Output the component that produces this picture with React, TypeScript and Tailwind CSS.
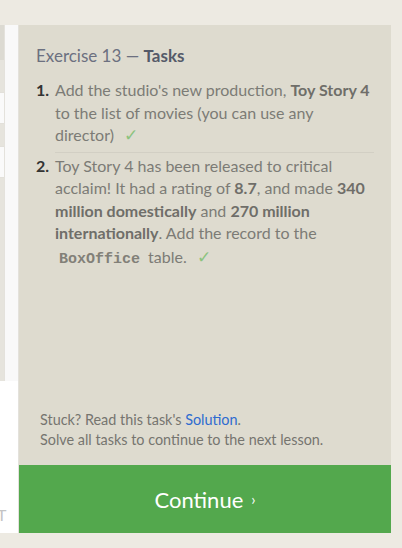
import React from 'react';

const font = { fontFamily: 'Lato, "Open Sans", sans-serif' };

function Check() {
  return <span className="ml-[10px] text-[17px] text-[#8cc37f]">✓</span>;
}

function LeftStrip() {
  return (
    <div className="w-[19px] flex flex-col shrink-0">
      <div className="flex flex-1">
        <div className="w-[4px] flex flex-col bg-[#e6e4dd]">
          <div className="h-[35px] bg-[#dcdad2]" />
          <div className="h-[32px]" />
          <div className="h-[32px] bg-[#fafafa] border-y border-[#e2e0da]" />
          <div className="h-[22px]" />
          <div className="h-[32px] bg-[#fafafa] border-y border-[#e2e0da]" />
        </div>
        <div className="flex-1 bg-[#f9f9f9] border-l border-r border-[#e4e2dc]" />
      </div>
      <div className="h-[152px] bg-white border-r border-[#e4e2dc] flex items-end pb-[10px] overflow-hidden">
        <span className="text-[16px] leading-none text-[#c4c4c4] -ml-[3px]">T</span>
      </div>
    </div>
  );
}

export default function App() {
  return (
    <div className="w-[402px] h-[548px] bg-[#edeae2] pt-[25px] pb-[15px] pr-[11px] flex overflow-hidden" style={font}>
      <LeftStrip />
      <div className="flex-1 flex flex-col bg-[#dedbcf]">
        <div className="flex-1 px-[17px] pt-[20px]">
          <h2 className="text-[17px] leading-[22px] text-[#6c7080]">
            Exercise 13 — <span className="font-bold text-[#555a69]">Tasks</span>
          </h2>
          <ol className="mt-[12px] text-[16px] leading-[22.5px] text-[#7c7b76]">
            <li className="flex pb-[5px] border-b border-[#d2cfc4] ml-[19px]">
              <span className="w-[19px] -ml-[19px] shrink-0 font-bold text-[#333]">1.</span>
              <span>
                Add the studio's new production, <b className="text-[#6f6e69]">Toy Story 4</b> to the list of movies (you can use any director)
                <Check />
              </span>
            </li>
            <li className="flex pt-[2px] ml-[19px]">
              <span className="w-[19px] -ml-[19px] shrink-0 font-bold text-[#333]">2.</span>
              <span>
                Toy Story 4 has been released to critical acclaim! It had a rating of <b className="text-[#6f6e69]">8.7</b>, and made <b className="text-[#6f6e69]">340 million domestically</b> and <b className="text-[#6f6e69]">270 million internationally</b>. Add the record to the{' '}
                <code className="inline-block leading-[20px] mt-[5px] px-[4px] text-[15px] font-bold text-[#828078]" style={{ fontFamily: '"Liberation Mono", monospace' }}>BoxOffice</code> table.
                <Check />
              </span>
            </li>
          </ol>
        </div>
        <div className="px-[21px] pb-[15px] text-[14.4px] leading-[20px] text-[#76756f]">
          <p>
            Stuck? Read this task's <span className="text-[#2f6bd0]">Solution</span>.
          </p>
          <p>Solve all tasks to continue to the next lesson.</p>
        </div>
        <button className="h-[68px] bg-[#53a84d] text-white text-[22px] flex items-center justify-center">
          Continue <span className="ml-[8px] text-[15px]">›</span>
        </button>
      </div>
    </div>
  );
}
